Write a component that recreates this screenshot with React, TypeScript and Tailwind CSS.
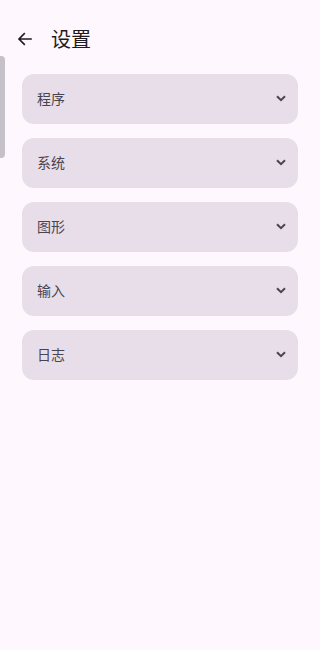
import React from "react";

const items = ["程序", "系统", "图形", "输入", "日志"];

export default function App() {
  return (
    <div
      className="relative w-[320px] h-[650px] bg-[#fef7fe] overflow-hidden"
      style={{ fontFamily: '"Noto Sans CJK SC", "Noto Sans", sans-serif' }}
    >
      <div className="absolute left-0 top-[56px] w-[5px] h-[102px] rounded-r-[4px] bg-[#c6c0c8]" />
      <div className="flex items-center h-[40px] mt-[19px] pl-[16px]">
        <svg width="18" height="18" viewBox="0 0 24 24" fill="none" className="text-[#1d1b20]">
          <path d="M20 12H4.5M11 5l-7 7 7 7" stroke="currentColor" strokeWidth="2.2" strokeLinecap="square" />
        </svg>
        <span className="ml-[17px] text-[20px] leading-none text-[#1d1b20]">设置</span>
      </div>
      <div className="flex flex-col gap-[14px] mt-[15px] px-[22px]">
        {items.map((t) => (
          <div
            key={t}
            className="flex items-center justify-between h-[50px] rounded-[12px] bg-[#e8deea] pl-[15px] pr-[12px]"
          >
            <span className="text-[14px] leading-[20px] mb-[3px] text-[#49454f]">{t}</span>
            <svg width="10" height="7" viewBox="0 0 10 7" fill="none" className="mb-[1px]">
              <path d="M1 1.2l4 4 4-4" stroke="#49454f" strokeWidth="2" />
            </svg>
          </div>
        ))}
      </div>
    </div>
  );
}
